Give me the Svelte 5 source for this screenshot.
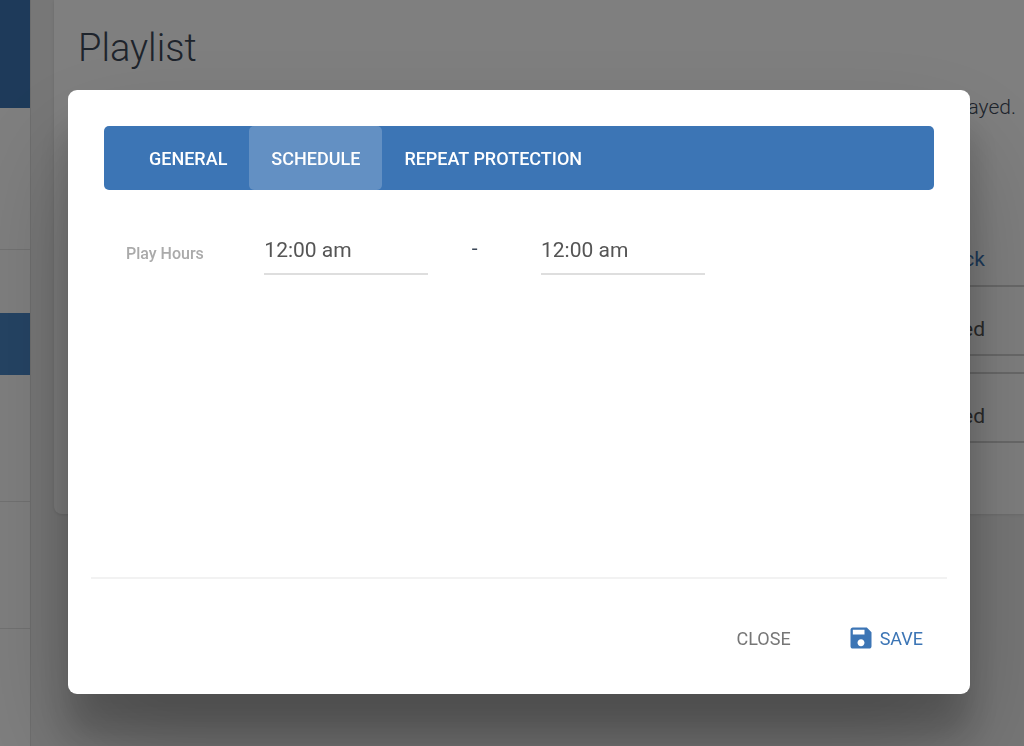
<script>
  // Tabs shown in the dialog header
  const tabs = [
    { id: 'general', label: 'General' },
    { id: 'schedule', label: 'Schedule' },
    { id: 'repeat', label: 'Repeat Protection' },
  ];

  let activeTab = $state('schedule');
  let open = $state(true);
  let startTime = $state('12:00 am');
  let endTime = $state('12:00 am');

  function close() {
    open = false;
  }
</script>

<div class="page">
  <aside class="sidebar">
    <div class="brand"></div>
    <div class="side-item first"></div>
    <div class="side-item second"></div>
    <div class="side-item active"></div>
    <div class="side-item tall"></div>
    <div class="side-item tall"></div>
  </aside>

  <main class="content">
    <section class="card">
      <h1>Playlist</h1>
      <p class="description">displayed.</p>
      <div class="list">
        <div class="list-head"><a href="#track">Track</a></div>
        <div class="list-row">Allowed</div>
        <div class="list-gap"></div>
        <div class="list-row">Allowed</div>
      </div>
    </section>
  </main>
</div>

{#if open}
  <div class="backdrop">
    <div class="modal" role="dialog" aria-modal="true" aria-label="Playlist">
      <div class="modal-body">
        <div class="tabs" role="tablist">
          {#each tabs as tab (tab.id)}
            <button
              type="button"
              role="tab"
              class="tab"
              class:active={activeTab === tab.id}
              aria-selected={activeTab === tab.id}
              onclick={() => (activeTab = tab.id)}
            >
              {tab.label}
            </button>
          {/each}
        </div>

        <div class="panel">
          {#if activeTab === 'schedule'}
            <div class="form-row">
              <label for="play-start">Play Hours</label>
              <div class="field">
                <input id="play-start" type="text" bind:value={startTime} />
              </div>
              <span class="dash">-</span>
              <div class="field">
                <input type="text" aria-label="Play Hours end" bind:value={endTime} />
              </div>
            </div>
          {/if}
        </div>
      </div>

      <footer class="modal-footer">
        <button type="button" class="action" onclick={close}>Close</button>
        <button type="button" class="action primary">
          <svg width="28" height="28" viewBox="0 0 24 24" aria-hidden="true">
            <path
              d="M17 3H5c-1.11 0-2 .9-2 2v14c0 1.1.89 2 2 2h14c1.1 0 2-.9 2-2V7l-4-4zm-5 16c-1.66 0-3-1.34-3-3s1.34-3 3-3 3 1.34 3 3-1.34 3-3 3zm3-10H5V5h10v4z"
            />
          </svg>
          Save
        </button>
      </footer>
    </div>
  </div>
{/if}

<style>
  :global(body) {
    margin: 0;
    background: #eee;
    font-family: Roboto, 'Liberation Sans', sans-serif;
  }

  /* Page behind the dialog */
  .page {
    display: flex;
    height: 100vh;
    overflow: hidden;
    background: #eee;
    color: #3c4858;
  }

  .sidebar {
    flex: 0 0 30px;
    background: #fff;
    border-right: 1px solid #ddd;
  }

  .brand {
    height: 108px;
    background: #3c75b5;
  }

  .side-item {
    box-sizing: border-box;
    border-bottom: 1px solid #e4e4e4;
  }

  .side-item.first {
    height: 142px;
  }

  .side-item.second {
    height: 63px;
    border-bottom: 0;
  }

  .side-item.active {
    height: 62px;
    border-bottom: 0;
    background: #4a88c8;
  }

  .side-item.tall {
    height: 127px;
  }

  .content {
    flex: 1;
    padding-left: 23px;
  }

  .card {
    box-sizing: border-box;
    height: 514px;
    border-radius: 0 0 0 8px;
    background: #fff;
    box-shadow: 0 1px 3px rgba(0, 0, 0, 0.1);
    text-align: right;
    font-size: 21px;
    line-height: 28px;
  }

  h1 {
    margin: 0;
    padding: 25px 24px 0;
    text-align: left;
    font-size: 38px;
    font-weight: 300;
    line-height: 46px;
  }

  .description {
    margin: 0;
    padding: 22px 8px 0 0;
    font-weight: 300;
  }

  .list {
    margin-left: 24px;
  }

  .list-head {
    box-sizing: border-box;
    height: 166px;
    padding: 124px 39px 0 0;
    border-bottom: 2px solid #d2d2d2;
  }

  .list-head a {
    color: #3c75b5;
    text-decoration: none;
  }

  .list-row {
    box-sizing: border-box;
    height: 69px;
    padding: 28px 39px 0 0;
    border-bottom: 2px solid #d2d2d2;
    color: #555;
  }

  .list-gap {
    box-sizing: border-box;
    height: 18px;
    border-bottom: 2px solid #d2d2d2;
  }

  /* Dialog */
  .backdrop {
    position: fixed;
    inset: 0;
    display: flex;
    align-items: flex-start;
    padding: 90px 54px 52px 68px;
    overflow: hidden;
    background: rgba(0, 0, 0, 0.5);
  }

  .modal {
    flex: 1;
    border-radius: 9px;
    background: #fff;
    box-shadow:
      0 40px 36px 0 rgba(0, 0, 0, 0.2),
      0 60px 115px 0 rgba(0, 0, 0, 0.22);
  }

  .modal-body {
    padding: 36px 36px 0;
  }

  .tabs {
    display: flex;
    padding: 0 23px;
    border-radius: 5px;
    background: #3c75b5;
  }

  button {
    border: 0;
    background: none;
    font-family: inherit;
    font-size: 18px;
    text-transform: uppercase;
    cursor: pointer;
  }

  .tab {
    height: 64px;
    padding: 0 22px;
    border-radius: 5px;
    color: #fff;
    font-weight: 500;
  }

  .tab.active {
    background: rgba(255, 255, 255, 0.2);
  }

  .panel {
    min-height: 387px;
  }

  .form-row {
    display: grid;
    grid-template-columns: 2fr 3fr 1fr 3fr 3fr;
    padding-top: 46px;
  }

  label {
    padding: 8px 0 0 22px;
    color: #aaa;
    font-size: 16px;
    font-weight: 500;
    line-height: 20px;
  }

  .field {
    padding: 0 22px;
  }

  input {
    box-sizing: border-box;
    width: 100%;
    height: 39px;
    padding: 0 0 10px;
    border: 0;
    border-bottom: 2px solid #dedede;
    outline: 0;
    background: none;
    color: #555;
    font-family: inherit;
    font-size: 21px;
  }

  .dash {
    padding-left: 22px;
    color: #3c4858;
    font-size: 21px;
    line-height: 24px;
  }

  .modal-footer {
    display: flex;
    justify-content: flex-end;
    gap: 8px;
    margin: 0 23px;
    padding: 29px 0 26px;
    border-top: 2px solid #f2f2f2;
  }

  .action {
    display: flex;
    align-items: center;
    gap: 5px;
    height: 60px;
    padding: 0 24px;
    color: #777;
  }

  .primary {
    color: #3c75b5;
  }

  .primary svg {
    fill: currentColor;
  }
</style>
